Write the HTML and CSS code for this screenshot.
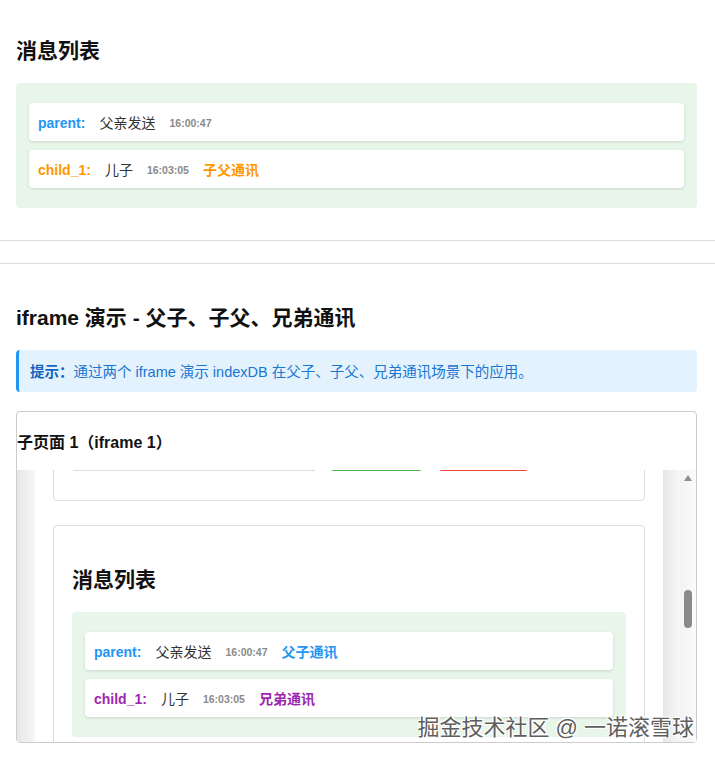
FILE: index.html
```html
<!DOCTYPE html>
<html lang="zh-CN">
<head>
    <meta charset="UTF-8">
    <meta name="viewport" content="width=device-width, initial-scale=1.0">
    <title>indexDB 通讯演示</title>
    <link rel="stylesheet" href="styles.css">
</head>
<body>
    <section class="section section-list">
        <h2>消息列表</h2>
        <div class="msg-list">
            <div class="msg"><span class="from parent">parent:</span><span class="text">父亲发送</span><span class="time">16:00:47</span></div>
            <div class="msg"><span class="from child">child_1:</span><span class="text">儿子</span><span class="time">16:03:05</span><span class="tag child">子父通讯</span></div>
        </div>
    </section>

    <section class="section section-demo">
        <h2>iframe 演示 - 父子、子父、兄弟通讯</h2>
        <div class="tip"><strong>提示：</strong>通过两个 iframe 演示 indexDB 在父子、子父、兄弟通讯场景下的应用。</div>

        <div class="frame-box">
            <h3 class="frame-title">子页面 1（iframe 1）</h3>
            <div class="frame-view">
                <div class="gutter"></div>
                <div class="frame-page">
                    <div class="frame-scroll">
                        <div class="card controls">
                            <div class="input"></div>
                            <div class="btn btn-send"></div>
                            <div class="btn btn-clear"></div>
                        </div>
                        <div class="card">
                            <h2>消息列表</h2>
                            <div class="msg-list">
                                <div class="msg"><span class="from parent">parent:</span><span class="text">父亲发送</span><span class="time">16:00:47</span><span class="tag parent">父子通讯</span></div>
                                <div class="msg"><span class="from sibling">child_1:</span><span class="text">儿子</span><span class="time">16:03:05</span><span class="tag sibling">兄弟通讯</span></div>
                            </div>
                        </div>
                    </div>
                </div>
                <div class="gutter"></div>
                <div class="scrollbar"><span class="arrow"></span><span class="thumb"></span></div>
            </div>
            <div class="watermark">掘金技术社区 @ 一诺滚雪球</div>
        </div>
    </section>
</body>
</html>
```

FILE: styles.css
```css
body { margin: 0; font-family: "Liberation Sans", Arial, "Noto Sans CJK SC", sans-serif; color: #333; background: #fff; }
h2 { margin: 0 0 20px; font-size: 21px; line-height: 25px; color: #111; font-weight: bold; }

.section { padding: 0 18px 0 16px; }
.section-list { padding-top: 38px; padding-bottom: 32px; border-bottom: 1px solid #ddd; }
.section-demo { margin-top: 22px; padding-top: 41px; border-top: 1px solid #ddd; }

.msg-list { background-color: #e8f5e9; border-radius: 4px; padding: 20px 13px; display: flex; flex-direction: column; gap: 9px; }
.msg { display: flex; align-items: center; gap: 14px; background: #fff; border-radius: 4px; padding: 11px 9px 9px; line-height: 18px; box-shadow: 0 1px 3px rgba(0, 0, 0, 0.12); font-size: 14px; }
.from { font-weight: bold; }
.from.parent, .tag.parent { color: #2196f3; }
.from.child, .tag.child { color: #ff9800; }
.from.sibling, .tag.sibling { color: #9c27b0; }
.text { color: #333; }
.time { font-size: 10.5px; font-weight: bold; color: #8a8a8a; }
.tag { font-weight: bold; }

.tip { background: #e3f2fd; border-left: 3px solid #2196f3; border-radius: 4px; padding: 13px 11px 11px; font-size: 14.5px; line-height: 18px; color: #1976d2; margin-bottom: 19px; }
.tip strong { color: #1565c0; }

.frame-box { position: relative; border: 1px solid #ccc; border-radius: 4px; margin-bottom: 20px; }
.frame-title { margin: 21px 0 17px; font-size: 16px; line-height: 20px; color: #111; }
.frame-view { display: flex; height: 272px; overflow: hidden; }
.gutter { width: 18px; background: linear-gradient(to right, #e6e6e6, #f7f7f7); }
.frame-page + .gutter { width: 17px; }
.frame-page { flex: 1; background: #fff; padding: 0 18px; overflow: hidden; }
.frame-scroll { margin-top: -55px; }

.card { border: 1px solid #ddd; border-radius: 4px; padding: 20px 18px; margin-bottom: 24px; }
.card h2 { margin-top: 21px; }
.controls { display: flex; gap: 16px; padding: 19px 19px 29px; }
.input { width: 242px; height: 36px; border-bottom: 1px solid #ddd; box-sizing: border-box; }
.btn { width: 91px; height: 36px; border-radius: 3px; }
.btn-send { background: #4caf50; }
.btn-clear { width: 89px; background: #f44336; margin-left: 1px; }

.scrollbar { width: 16px; display: flex; flex-direction: column; align-items: center; background: linear-gradient(to right, #f3f3f3, #fbfbfb); }
.arrow { margin-top: 5px; width: 0; height: 0; border-left: 4px solid transparent; border-right: 4px solid transparent; border-bottom: 6px solid #8f8f8f; }
.thumb { margin-top: 109px; width: 8px; height: 38px; border-radius: 4px; background: #8a8a8a; }

.watermark { position: absolute; right: 2px; bottom: 2px; font-size: 22px; line-height: 24px; color: #5e5e5e; text-shadow: 1px 1px 0 #fff, -1px -1px 0 #fff, 1px -1px 0 #fff, -1px 1px 0 #fff, 0 0 2px #fff; white-space: nowrap; }
```
